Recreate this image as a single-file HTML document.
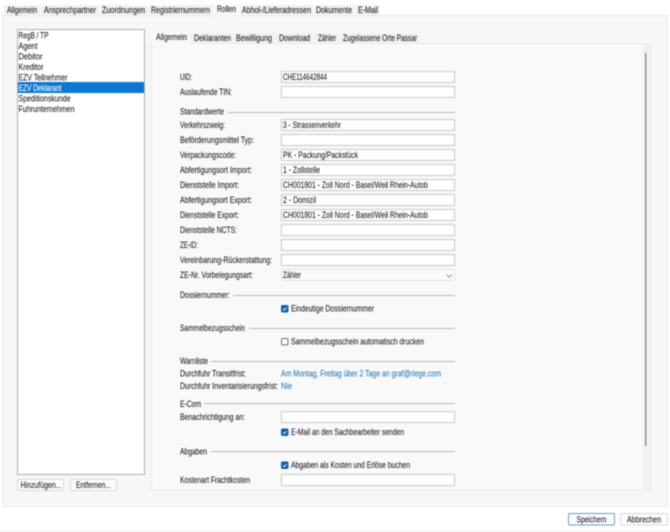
<!DOCTYPE html>
<html><head><meta charset="utf-8"><style>
html,body{margin:0;padding:0;background:#fff;width:670px;height:532px;overflow:hidden}
svg{display:block;filter:blur(.42px)}
text{font-family:"Liberation Sans",sans-serif;font-size:9px;fill:#1c1c1c;stroke:#1c1c1c;stroke-width:.08px}
.f{fill:#fff;stroke:#d0d0d0;stroke-width:1.2}
.l{stroke:#b8b8b8;stroke-width:1}
text.a{fill:#2a7ab8;stroke:#2a7ab8}
text.w{fill:#fff;stroke:#fff}
.t{fill:#f0f0f0}
</style></head><body>
<svg width="670" height="532" viewBox="0 0 670 532" xmlns="http://www.w3.org/2000/svg">
<rect width="670" height="532" fill="#fff"/>
<!-- outer panel -->
<rect x="2.5" y="15.5" width="665" height="491" fill="#f7f7f7" stroke="#ececec"/>
<!-- top tabs -->
<rect x="4" y="5" width="36" height="10" class="t"/><rect x="41" y="5" width="58" height="10" class="t"/><rect x="100" y="5" width="48" height="10" class="t"/><rect x="149" y="5" width="64" height="10" class="t"/>
<rect x="240" y="5" width="73" height="10" class="t"/><rect x="314" y="5" width="40" height="10" class="t"/><rect x="355" y="5" width="25" height="10" class="t"/>
<rect x="214" y="4" width="25" height="12" fill="#f7f7f7"/>
<g>
<text x="7" y="13" textLength="30" lengthAdjust="spacingAndGlyphs">Allgemein</text>
<text x="44" y="13" textLength="52" lengthAdjust="spacingAndGlyphs">Ansprechpartner</text>
<text x="102" y="13" textLength="43" lengthAdjust="spacingAndGlyphs">Zuordnungen</text>
<text x="151" y="13" textLength="59" lengthAdjust="spacingAndGlyphs">Registriernummern</text>
<text x="217" y="12" textLength="19" lengthAdjust="spacingAndGlyphs">Rollen</text>
<text x="242" y="13" textLength="69" lengthAdjust="spacingAndGlyphs">Abhol-/Lieferadressen</text>
<text x="316" y="13" textLength="36" lengthAdjust="spacingAndGlyphs">Dokumente</text>
<text x="358" y="13" textLength="20" lengthAdjust="spacingAndGlyphs">E-Mail</text>
</g>
<!-- list -->
<rect x="17.5" y="29.5" width="127" height="445" fill="#fff" stroke="#b0b0b0"/>
<rect x="18" y="82" width="126" height="11" fill="#0a78d4"/>
<text x="18.5" y="38.5" textLength="30" lengthAdjust="spacingAndGlyphs">RegB / TP</text>
<text x="18.5" y="49" textLength="19" lengthAdjust="spacingAndGlyphs">Agent</text>
<text x="18.5" y="59.5" textLength="24" lengthAdjust="spacingAndGlyphs">Debitor</text>
<text x="18.5" y="70" textLength="25" lengthAdjust="spacingAndGlyphs">Kreditor</text>
<text x="18.5" y="80.5" textLength="49" lengthAdjust="spacingAndGlyphs">EZV Teilnehmer</text>
<text x="18.5" y="91" textLength="43" lengthAdjust="spacingAndGlyphs" class="w">EZV Deklarant</text>
<text x="18.5" y="101.5" textLength="52" lengthAdjust="spacingAndGlyphs">Speditionskunde</text>
<text x="18.5" y="112" textLength="56" lengthAdjust="spacingAndGlyphs">Fuhrunternehmen</text>
<!-- list buttons -->
<rect x="17.5" y="479.5" width="46" height="11" rx="1.5" fill="#fdfdfd" stroke="#d8d8d8"/>
<rect x="70.5" y="479.5" width="46" height="11" rx="1.5" fill="#fdfdfd" stroke="#d8d8d8"/>
<text x="20.5" y="488" textLength="41" lengthAdjust="spacingAndGlyphs">Hinzufügen...</text>
<text x="76" y="488" textLength="35" lengthAdjust="spacingAndGlyphs">Entfernen...</text>
<!-- inner panel -->
<rect x="151.5" y="43.5" width="500" height="447" fill="#f9f9f9" stroke="#ececec"/>
<rect x="643" y="44" width="8.5" height="446" fill="#f1f1f1"/>
<rect x="645" y="53" width="1.4" height="393" fill="#8a8a8a"/>
<!-- sub tabs -->
<rect x="190" y="33" width="43" height="10" class="t"/><rect x="234" y="33" width="40" height="10" class="t"/><rect x="275" y="33" width="38" height="10" class="t"/><rect x="314" y="33" width="25" height="10" class="t"/><rect x="340" y="33" width="79" height="10" class="t"/>
<rect x="152" y="32" width="38" height="12" fill="#f9f9f9"/>
<text x="156" y="40" textLength="31" lengthAdjust="spacingAndGlyphs">Allgemein</text>
<text x="194" y="41" textLength="37" lengthAdjust="spacingAndGlyphs">Deklaranten</text>
<text x="236" y="41" textLength="36" lengthAdjust="spacingAndGlyphs">Bewilligung</text>
<text x="279" y="41" textLength="31" lengthAdjust="spacingAndGlyphs">Download</text>
<text x="318" y="41" textLength="18" lengthAdjust="spacingAndGlyphs">Zähler</text>
<text x="343" y="41" textLength="74" lengthAdjust="spacingAndGlyphs">Zugelassene Orte Passar</text>
<!-- labels -->
<g>
<text x="180" y="80" textLength="12" lengthAdjust="spacingAndGlyphs">UID:</text>
<text x="180" y="95" textLength="52" lengthAdjust="spacingAndGlyphs">Auslaufende TIN:</text>
<text x="180" y="114.5" textLength="44" lengthAdjust="spacingAndGlyphs">Standardwerte</text>
<text x="180" y="128" textLength="45" lengthAdjust="spacingAndGlyphs">Verkehrszweig:</text>
<text x="180" y="143" textLength="74" lengthAdjust="spacingAndGlyphs">Beförderungsmittel Typ:</text>
<text x="180" y="158" textLength="56" lengthAdjust="spacingAndGlyphs">Verpackungscode:</text>
<text x="180" y="173" textLength="72" lengthAdjust="spacingAndGlyphs">Abfertigungsort Import:</text>
<text x="180" y="188" textLength="59" lengthAdjust="spacingAndGlyphs">Dienststelle Import:</text>
<text x="180" y="203" textLength="72" lengthAdjust="spacingAndGlyphs">Abfertigungsort Export:</text>
<text x="180" y="218" textLength="59" lengthAdjust="spacingAndGlyphs">Dienststelle Export:</text>
<text x="180" y="233" textLength="57" lengthAdjust="spacingAndGlyphs">Dienststelle NCTS:</text>
<text x="180" y="248" textLength="18" lengthAdjust="spacingAndGlyphs">ZE-ID:</text>
<text x="180" y="263" textLength="92" lengthAdjust="spacingAndGlyphs">Vereinbarung-Rückerstattung:</text>
<text x="180" y="278" textLength="73" lengthAdjust="spacingAndGlyphs">ZE-Nr. Vorbelegungsart:</text>
<text x="180" y="298" textLength="50" lengthAdjust="spacingAndGlyphs">Dossiernummer:</text>
<text x="180" y="331" textLength="65" lengthAdjust="spacingAndGlyphs">Sammelbezugsschein</text>
<text x="180" y="364" textLength="28" lengthAdjust="spacingAndGlyphs">Warnliste</text>
<text x="180" y="376.5" textLength="66" lengthAdjust="spacingAndGlyphs">Durchfuhr Transitfrist:</text>
<text x="180" y="389" textLength="98" lengthAdjust="spacingAndGlyphs">Durchfuhr Inventarisierungsfrist:</text>
<text x="180" y="407" textLength="21" lengthAdjust="spacingAndGlyphs">E-Com</text>
<text x="180" y="420" textLength="65" lengthAdjust="spacingAndGlyphs">Benachrichtigung an:</text>
<text x="180" y="454.5" textLength="27" lengthAdjust="spacingAndGlyphs">Abgaben</text>
<text x="180" y="483" textLength="70" lengthAdjust="spacingAndGlyphs">Kostenart Frachtkosten</text>
</g>
<!-- section lines -->
<line x1="228" y1="112.5" x2="455" y2="112.5" class="l"/>
<line x1="233" y1="295.5" x2="455" y2="295.5" class="l"/>
<line x1="249" y1="328.5" x2="455" y2="328.5" class="l"/>
<line x1="211" y1="361.5" x2="455" y2="361.5" class="l"/>
<line x1="204" y1="403.5" x2="455" y2="403.5" class="l"/>
<line x1="211" y1="451.5" x2="455" y2="451.5" class="l"/>
<!-- fields -->
<rect x="281.5" y="71.5" width="173" height="11" class="f"/>
<rect x="281.5" y="86.5" width="173" height="11" class="f"/>
<rect x="281.5" y="119.5" width="173" height="11" class="f"/>
<rect x="281.5" y="134.5" width="173" height="11" class="f"/>
<rect x="281.5" y="149.5" width="173" height="11" class="f"/>
<rect x="281.5" y="164.5" width="173" height="11" class="f"/>
<rect x="281.5" y="179.5" width="173" height="11" class="f"/>
<rect x="281.5" y="194.5" width="173" height="11" class="f"/>
<rect x="281.5" y="209.5" width="173" height="11" class="f"/>
<rect x="281.5" y="224.5" width="173" height="11" class="f"/>
<rect x="281.5" y="239.5" width="173" height="11" class="f"/>
<rect x="281.5" y="254.5" width="173" height="11" class="f"/>
<rect x="281.5" y="269.5" width="173" height="11" rx="1" fill="#fbfbfb" stroke="#e2e2e2"/>
<rect x="281.5" y="411.5" width="173" height="11" class="f"/>
<rect x="281.5" y="474.5" width="173" height="11" class="f"/>
<text x="283" y="80" textLength="44" lengthAdjust="spacingAndGlyphs">CHE114642844</text>
<text x="283" y="128" textLength="58" lengthAdjust="spacingAndGlyphs">3 - Strassenverkehr</text>
<text x="283" y="158" textLength="75" lengthAdjust="spacingAndGlyphs">PK - Packung/Packstück</text>
<text x="283" y="173" textLength="37" lengthAdjust="spacingAndGlyphs">1 - Zollstelle</text>
<text x="283" y="188" textLength="145" lengthAdjust="spacingAndGlyphs">CH001801 - Zoll Nord - Basel/Weil Rhein-Autob</text>
<text x="283" y="203" textLength="33" lengthAdjust="spacingAndGlyphs">2 - Domizil</text>
<text x="283" y="218" textLength="145" lengthAdjust="spacingAndGlyphs">CH001801 - Zoll Nord - Basel/Weil Rhein-Autob</text>
<text x="283" y="278" textLength="18" lengthAdjust="spacingAndGlyphs">Zähler</text>
<path d="M446.5 274.5l2.7 2.7 2.7-2.7" fill="none" stroke="#777" stroke-width=".8"/>
<!-- checkboxes -->
<g fill="#0f62b5">
<rect x="281" y="305" width="7.5" height="7.5" rx="1.5"/>
<rect x="281" y="428.5" width="7.5" height="7.5" rx="1.5"/>
<rect x="281" y="461.5" width="7.5" height="7.5" rx="1.5"/>
</g>
<g fill="none" stroke="#fff" stroke-width=".8">
<path d="M283 309l1.2 1.2 2.4-2.6"/>
<path d="M283 432.5l1.2 1.2 2.4-2.6"/>
<path d="M283 465.5l1.2 1.2 2.4-2.6"/>
</g>
<rect x="281.5" y="338.5" width="6.5" height="6.5" rx="1.5" fill="#fafafa" stroke="#777"/>
<text x="291" y="311.5" textLength="83" lengthAdjust="spacingAndGlyphs">Eindeutige Dossiernummer</text>
<text x="291" y="344.5" textLength="133" lengthAdjust="spacingAndGlyphs">Sammelbezugsschein automatisch drucken</text>
<text x="291" y="435" textLength="113" lengthAdjust="spacingAndGlyphs">E-Mail an den Sachbearbeiter senden</text>
<text x="291" y="468" textLength="119" lengthAdjust="spacingAndGlyphs">Abgaben als Kosten und Erlöse buchen</text>
<text x="281" y="376.5" textLength="160" lengthAdjust="spacingAndGlyphs" class="a">Am Montag, Freitag über 2 Tage an graf@riege.com</text>
<text x="281" y="389" textLength="11" lengthAdjust="spacingAndGlyphs" class="a">Nie</text>
<!-- bottom buttons -->
<rect x="568.5" y="513.5" width="46" height="11.5" rx="1.5" fill="#fdfdfd" stroke="#5f9fdb"/>
<rect x="620.5" y="513.5" width="47" height="11.5" rx="1.5" fill="#fdfdfd" stroke="#d8d8d8"/>
<text x="576.5" y="522.5" textLength="30" lengthAdjust="spacingAndGlyphs">Speichern</text>
<text x="627" y="522.5" textLength="34" lengthAdjust="spacingAndGlyphs">Abbrechen</text>
<line x1="0" y1="531.5" x2="670" y2="531.5" stroke="#f0f0f0"/>
</svg>
</body></html>
